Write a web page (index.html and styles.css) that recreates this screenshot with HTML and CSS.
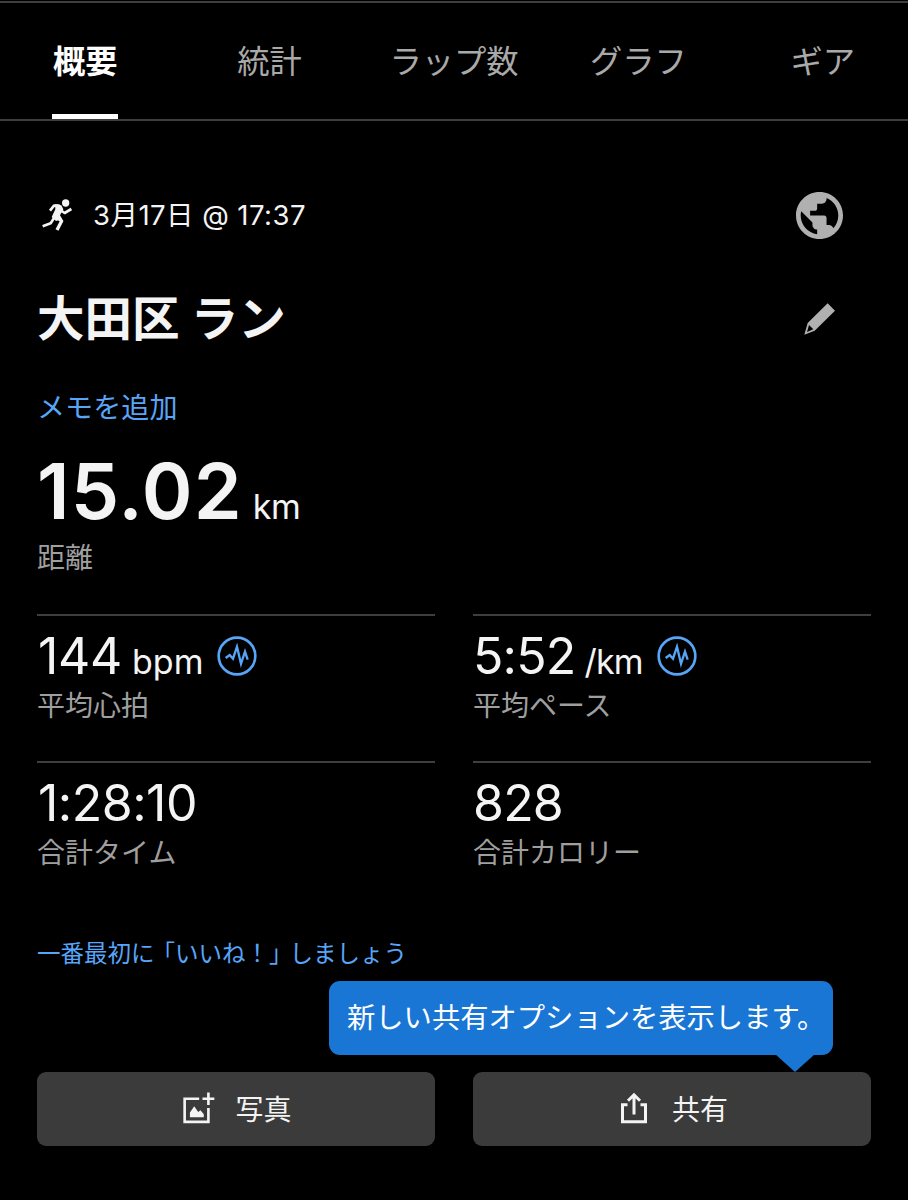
FILE: index.html
```html
<!DOCTYPE html>
<html lang="ja">
<head>
<meta charset="utf-8">
<title>大田区 ラン</title>
<link rel="stylesheet" href="styles.css">
</head>
<body>
<nav class="tabs">
  <a class="tab active"><span>概要</span></a>
  <a class="tab"><span>統計</span></a>
  <a class="tab"><span>ラップ数</span></a>
  <a class="tab"><span>グラフ</span></a>
  <a class="tab"><span>ギア</span></a>
</nav>
<main class="content">
  <div class="meta">
    <svg class="runner" viewBox="65 59 90 96" fill="none" stroke="#f4f4f4" stroke-linejoin="round">
      <circle cx="136" cy="71" r="11" fill="#f4f4f4" stroke="none"/>
      <path d="M118 79L101 79L89 94" stroke-width="8"/>
      <path d="M117 90L133 101L153 89" stroke-width="8"/>
      <path d="M104 75L123 78L129 90L119 108L126 120L107 125L94 113L105 90Z" fill="#f4f4f4" stroke="none"/>
      <path d="M108 112L124 125L110 152" stroke-width="10"/>
      <path d="M101 116L91 132L67 141" stroke-width="8"/>
    </svg>
    <span class="date">3月17日 @ 17:37</span>
    <svg class="globe" viewBox="2 2 20 20" fill="#b0b0b0"><path d="M12 2C6.48 2 2 6.48 2 12s4.48 10 10 10 10-4.48 10-10S17.52 2 12 2zm-1 17.93c-3.95-.49-7-3.85-7-7.93 0-.62.08-1.21.21-1.79L9 15v1c0 1.1.9 2 2 2v1.93zm6.9-2.54c-.26-.81-1-1.39-1.9-1.39h-1v-3c0-.55-.45-1-1-1H8v-2h2c.55 0 1-.45 1-1V7h2c1.1 0 2-.9 2-2v-.41c2.93 1.19 5 4.06 5 7.41 0 2.08-.8 3.97-2.1 5.39z"/></svg>
  </div>
  <div class="title-row">
    <h1>大田区 ラン</h1>
    <svg class="pencil" viewBox="72 367 96 96" fill="#b0b0b0" fill-rule="evenodd"><path d="M143 368L165 390L104 450L73 462L83 427ZM87 433L81 454L100 446Z"/></svg>
  </div>
  <a class="memo">メモを追加</a>
  <div class="distance"><span class="big">15.02</span><span class="unit">km</span></div>
  <div class="label">距離</div>
  <section class="stats">
    <div class="stat">
      <div class="value"><span class="num n-hr">144</span><span class="unit u-bpm">bpm</span>
        <svg class="pulse" viewBox="590 108 120 120" fill="none" stroke="#58a5f8"><circle cx="650" cy="168" r="55" stroke-width="8"/><path d="M616 174L628 165L638 176L650 140L662 191L674 155L682 179" stroke-width="7"/></svg>
      </div>
      <div class="label">平均心拍</div>
    </div>
    <div class="stat">
      <div class="value"><span class="num n-pace">5:52</span><span class="unit u-pace">/km</span>
        <svg class="pulse" viewBox="590 108 120 120" fill="none" stroke="#58a5f8"><circle cx="650" cy="168" r="55" stroke-width="8"/><path d="M616 174L628 165L638 176L650 140L662 191L674 155L682 179" stroke-width="7"/></svg>
      </div>
      <div class="label">平均ペース</div>
    </div>
    <div class="stat">
      <div class="value"><span class="num n-time">1:28:10</span></div>
      <div class="label">合計タイム</div>
    </div>
    <div class="stat">
      <div class="value"><span class="num n-cal">828</span></div>
      <div class="label">合計カロリー</div>
    </div>
  </section>
  <a class="like">一番最初<span class="tight">に</span>「いいね！<span class="tight">」</span>しましょう</a>
  <div class="actions">
    <button class="btn">
      <svg class="icon" viewBox="492 95 97 96" fill="#f4f4f4"><path d="M541 111H493V189H573V143H565V181H501V119H541ZM565 96H573V111H587V119H573V134H565V119H551V111H565ZM513 171V157L526 138L538 155L545 150L555 162V171Z"/></svg>
      <span>写真</span>
    </button>
    <div class="share">
      <div class="tip">新しい共有オプションを表示します。</div>
      <button class="btn">
        <svg class="icon" viewBox="618 1092 32 32" fill="none" stroke="#f4f4f4" stroke-width="3"><path d="M627.5 1104.8H622.5V1121.8H645.5V1104.8H640.5M634 1114.5V1095M628 1100.8L634 1094.8L640 1100.8"/></svg>
        <span>共有</span>
      </button>
    </div>
  </div>
</main>
</body>
</html>
```
FILE: styles.css
```css
* { box-sizing: border-box; }
body {
  margin: 0;
  padding-top: 1px;
  background: #000;
  color: #f4f4f4;
  font-family: Inter, "Noto Sans CJK JP", sans-serif;
  font-size: 28px;
  overflow: hidden;
  min-height: 1200px;
}
.tabs {
  display: grid;
  grid-template-columns: repeat(5, 184.4px);
  justify-content: center;
  height: 120px;
  border-top: 2px solid #3e3e3e;
  border-bottom: 2px solid #3e3e3e;
}
.tab { display: flex; justify-content: center; color: #a9a9a9; font-size: 32.3px; line-height: 118px; }
.tab span { display: block; height: 116px; white-space: nowrap; }
.active { color: #fff; font-weight: 700; }
.active span { width: 66px; border-bottom: 5px solid #fff; text-align: center; }
.content { padding: 0 37px; }
.meta { display: flex; align-items: center; height: 48px; margin-top: 70px; }
.runner { width: 30px; height: 32px; margin-left: 5px; }
.date { margin-left: 21px; font-size: 27.5px; letter-spacing: 0.45px; line-height: 50px; white-space: nowrap; }
.globe { width: 47px; height: 47px; margin-left: auto; margin-right: 28px; }
.title-row { display: flex; align-items: center; justify-content: space-between; height: 70px; margin-top: 45px; }
h1 { margin: 0; font-size: 47.5px; line-height: 70px; font-weight: 700; white-space: nowrap; }
.pencil { width: 32px; height: 32px; margin-right: 35px; }
.memo, .like { display: block; color: #58a5f8; white-space: nowrap; }
.memo { font-size: 28.1px; line-height: 40px; margin-top: 34px; }
.distance { display: flex; align-items: baseline; height: 80px; line-height: 80px; margin-top: 23px; }
.big { font-size: 77px; font-weight: 600; letter-spacing: 1.1px; }
.unit { font-size: 34px; margin-left: 10px; letter-spacing: -0.4px; }
.label { color: #9f9f9f; line-height: 40px; white-space: nowrap; }
.distance + .label { margin-top: 7px; }
.stats { display: grid; grid-template-columns: 398px 398px; column-gap: 38px; margin-top: 36px; }
.stat { height: 147px; border-top: 2px solid #3e3e3e; }
.value { display: flex; align-items: baseline; height: 60px; line-height: 60px; margin-top: 10px; }
.num { font-size: 50px; }
.n-hr { margin-left: 1px; letter-spacing: -0.3px; }
.n-pace, .n-cal { letter-spacing: -0.8px; }
.n-time { margin-left: 1px; letter-spacing: -0.5px; }
.u-bpm { letter-spacing: 0; }
.u-pace { margin-left: 9px; letter-spacing: -0.8px; }
.pulse { width: 40px; height: 40px; margin-left: 14px; align-self: center; }
.stat .label { margin-top: 0; }
.like { font-size: 23.5px; line-height: 36px; margin-top: 28px; }
.tight { letter-spacing: -3px; }
.actions { display: grid; grid-template-columns: 398px 398px; column-gap: 38px; margin-top: 100px; }
.btn {
  display: flex;
  align-items: center;
  justify-content: center;
  gap: 20px;
  width: 100%;
  height: 74px;
  padding: 0 0 2px 3px;
  border: 0;
  border-radius: 9px;
  background: #3b3b3b;
  color: #f4f4f4;
  font: inherit;
}
.icon { width: 32px; height: 32px; }
.share { position: relative; }
.share .btn { gap: 22px; padding-left: 2px; }
.tip {
  position: absolute;
  right: 38px;
  bottom: 91.5px;
  width: 504px;
  height: 73.5px;
  padding-left: 18px;
  border-radius: 11px;
  background: #1976d5;
  color: #fff;
  font-size: 28.3px;
  line-height: 75px;
  white-space: nowrap;
}
.tip::after {
  content: "";
  position: absolute;
  top: 73px;
  left: 446px;
  border: 20px solid transparent;
  border-top: 18.5px solid #1976d5;
  border-bottom: 0;
}
```
